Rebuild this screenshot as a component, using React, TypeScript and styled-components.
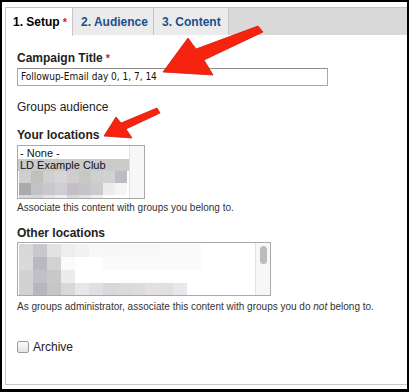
import React from "react";
import styled, { createGlobalStyle } from "styled-components";

const Global = createGlobalStyle`
  html, body { margin: 0; padding: 0; background: #000; }
  body { font-family: "Liberation Sans", Arial, sans-serif; }
`;

const Frame = styled.div`
  position: relative;
  width: 409px;
  height: 392px;
  box-sizing: border-box;
  background: #000;
  padding: 2px 2px 3px 2px;
`;

const Sheet = styled.div`
  height: 100%;
  background: #fff;
  box-sizing: border-box;
  padding: 5px 0 4px 3px;
  display: flex;
`;

const Panel = styled.div`
  flex: 1;
  border-left: 1px solid #c6c6c6;
  border-bottom: 1px solid #c6c6c6;
  display: flex;
  flex-direction: column;
`;

const TabBar = styled.div`
  display: flex;
  height: 28px;
  background: #d9d9d9;
  border-top: 1px solid #c4c4c4;
  box-sizing: border-box;
`;

const Tab = styled.div<{ $active?: boolean; $w: number }>`
  width: ${(p) => p.$w}px;
  box-sizing: border-box;
  background: ${(p) => (p.$active ? "#fff" : "#ebebeb")};
  border-right: 1px solid #c6c6c6;
  color: ${(p) => (p.$active ? "#000" : "#1b4f8c")};
  font-weight: bold;
  font-size: 12px;
  padding: 7px 0 0 ${(p) => (p.$active ? 7 : 8)}px;
  margin-bottom: ${(p) => (p.$active ? "-1px" : "0")};
  white-space: nowrap;
`;

const Star = styled.span`
  color: #d8202a;
  font-size: 11px;
  margin-left: 3px;
`;

const Body = styled.div`
  padding: 15px 0 0 11px;
  display: flex;
  flex-direction: column;
  color: #222;
`;

const Label = styled.div<{ $mt?: number }>`
  font-weight: bold;
  font-size: 12px;
  color: #222;
  margin-top: ${(p) => p.$mt ?? 0}px;
  height: 16px;
  line-height: 16px;
`;

const Plain = styled.div<{ $mt?: number }>`
  font-size: 12px;
  color: #222;
  margin-top: ${(p) => p.$mt ?? 0}px;
  line-height: 16px;
`;

const TextInput = styled.div`
  width: 311px;
  height: 18px;
  box-sizing: border-box;
  border: 1px solid #a9a9a9;
  border-top-color: #8e8e8e;
  margin-top: 2px;
  font-family: "DejaVu Sans Condensed", "DejaVu Sans", sans-serif;
  font-size: 10px;
  line-height: 16px;
  padding-left: 3px;
  color: #111;
`;

const ListBox = styled.div<{ $w: number; $h: number; $mt?: number }>`
  width: ${(p) => p.$w}px;
  height: ${(p) => p.$h}px;
  box-sizing: border-box;
  border: 1px solid #a9a9a9;
  margin-top: ${(p) => p.$mt ?? 2}px;
  display: flex;
  overflow: hidden;
`;

const ListItems = styled.div`
  flex: 1;
  display: flex;
  flex-direction: column;
  padding-top: 1px;
  overflow: hidden;
`;

const Option = styled.div<{ $sel?: boolean }>`
  font-size: 11px;
  line-height: 12px;
  height: 12px;
  padding-left: 2px;
  color: #111;
  white-space: nowrap;
  background: ${(p) => (p.$sel ? "#cacaca" : "transparent")};
`;

const Blur = styled.div<{ $cols: number; $col: number; $row: number }>`
  display: grid;
  grid-template-columns: repeat(${(p) => p.$cols}, ${(p) => p.$col}px);
  grid-auto-rows: ${(p) => p.$row}px;
  padding-left: 1px;
`;

const Px = styled.div``;

const Scroll = styled.div`
  width: 15px;
  flex: none;
  background: #f7f7f7;
  border-left: 1px solid #e2e2e2;
  display: flex;
  justify-content: center;
  padding-top: 3px;
  box-sizing: border-box;
`;

const Thumb = styled.div`
  width: 7px;
  height: 18px;
  border-radius: 4px;
  background: #bcbcbc;
`;

const Help = styled.div<{ $mt?: number }>`
  font-size: 10px;
  color: #333;
  margin-top: ${(p) => p.$mt ?? 2}px;
  line-height: 13px;
  em { font-style: italic; }
`;

const CheckRow = styled.label`
  display: flex;
  align-items: center;
  gap: 4px;
  margin-top: 27px;
  font-size: 12px;
  color: #222;
`;

const Box = styled.span`
  width: 10px;
  height: 10px;
  border: 1px solid #9a9a9a;
  border-radius: 2px;
  background: linear-gradient(#fdfdfd, #e4e4e4);
  display: inline-block;
`;

const Arrows = styled.svg`
  position: absolute;
  left: 0;
  top: 0;
  pointer-events: none;
`;

const blur1 = [
  "#cfcfcf","#c0c0bc","#cdd0d0","#d5d5d5","#cfcdd0","#c6c8c4","#cdd1d3","#d2d2d2","#bdbcc5",
  "#a8abad","#c1c3c6","#c9c6cc","#d0ced4","#c4bec7","#c5c4c8","#cbcbcb","#ececec","#f5f5f5",
  "#d8d8d8","#d8d6d8","#e5e5e5","#ededed","#d9d9d9","#e2e2e2","#eeeeee","#ffffff","#ffffff",
];

const blur2 = [
  "#d8d8d8","#c8c8cc","#e2e2e2","#eeeeee","#f2f2f2","#f8f8f8","#f7f7f7","#f8f8f8","#f8f8f8","#f8f8f8","#fafafa","#fafafa","#fafafa","#ffffff","#ffffff","#ffffff",
  "#dadada","#b9b8c0","#d2d2d2","#fbfbfb","#ffffff","#ffffff","#fafafa","#fafafa","#fafafa","#fafafa","#fafafa","#fafafa","#fafafa","#ffffff","#ffffff","#ffffff",
  "#d2d2d2","#c1c0c8","#c8c8c8","#ececec","#ffffff","#ffffff","#ffffff","#ffffff","#ffffff","#ffffff","#ffffff","#ffffff","#ffffff","#ffffff","#ffffff","#ffffff",
  "#d2d2d2","#b8b6bc","#c6c6c6","#d8d8d8","#e7e7e7","#e0e0e4","#d8d7dc","#dadada","#dcdcdc","#e4e0e0","#e0e0e0","#e6e8ec","#ffffff","#ffffff","#ffffff","#ffffff",
  "#e4e4e4","#d0d0d4","#dcdcdc","#e0e0e0","#e4e4e4","#dedee2","#d8d8dc","#dcdcdc","#e0e0e0","#e4e4e4","#e6e6e6","#ececec","#f2f2f2","#ffffff","#ffffff","#ffffff",
];

export default function App() {
  return (
    <>
      <Global />
      <Frame>
        <Sheet>
          <Panel>
            <TabBar>
              <Tab $active $w={67}>1. Setup<Star>*</Star></Tab>
              <Tab $w={81}>2. Audience</Tab>
              <Tab $w={75}>3. Content</Tab>
            </TabBar>
            <Body>
              <Label>Campaign Title<Star>*</Star></Label>
              <TextInput>Followup-Email day 0, 1, 7, 14</TextInput>
              <Plain $mt={13}>Groups audience</Plain>
              <Label $mt={12}>Your locations</Label>
              <ListBox $w={128} $h={54}>
                <ListItems>
                  <Option>- None -</Option>
                  <Option $sel>LD Example Club</Option>
                  <Blur $cols={9} $col={12} $row={12}>
                    {blur1.map((c, i) => (
                      <Px key={i} style={{ background: c }} />
                    ))}
                  </Blur>
                </ListItems>
                <Scroll />
              </ListBox>
              <Help>Associate this content with groups you belong to.</Help>
              <Label $mt={11}>Other locations</Label>
              <ListBox $w={254} $h={54} $mt={1}>
                <ListItems>
                  <Blur $cols={16} $col={14} $row={13}>
                    {blur2.map((c, i) => (
                      <Px key={i} style={{ background: c }} />
                    ))}
                  </Blur>
                </ListItems>
                <Scroll>
                  <Thumb />
                </Scroll>
              </ListBox>
              <Help $mt={4}>
                As groups administrator, associate this content with groups you do <em>not</em> belong to.
              </Help>
              <CheckRow>
                <Box />
                Archive
              </CheckRow>
            </Body>
          </Panel>
        </Sheet>
        <Arrows width="409" height="392" viewBox="0 0 409 392">
          <path
            d="M163 72 L188 38 L196 49 L258 26 L263 32 L204 60 L213 75 Z"
            fill="#f6230f"
            stroke="#d41a08"
            strokeWidth="0.8"
            strokeLinejoin="round"
          />
          <path
            d="M104 136 L116 117 L121 123 L157 108 L160 113 L126 129 L132 138 Z"
            fill="#f6230f"
            stroke="#d41a08"
            strokeWidth="0.8"
            strokeLinejoin="round"
          />
        </Arrows>
      </Frame>
    </>
  );
}
